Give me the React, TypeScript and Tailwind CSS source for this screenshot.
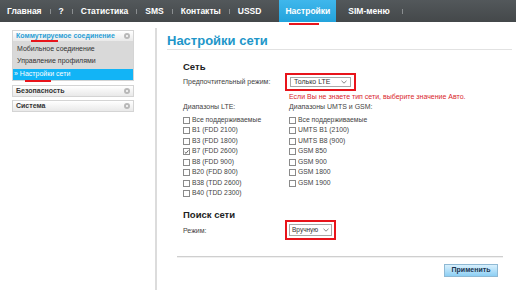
import React from "react";

const Chevron = () => (
  <svg width="6" height="4" viewBox="0 0 6 4" className="shrink-0">
    <path d="M0.5 0.8 L3 3.2 L5.5 0.8" fill="none" stroke="#666" strokeWidth="0.8" />
  </svg>
);

const Circle = () => (
  <span className="w-[6px] h-[6px] rounded-full bg-[#b8b8b8] flex items-center justify-center shrink-0">
    <span className="w-[2px] h-[2px] rounded-full bg-white" />
  </span>
);

const Check = ({ checked, label }: { checked?: boolean; label: string }) => (
  <div className="h-[10.5px] flex items-center">
    <span className="w-[7px] h-[7px] border border-[#8a8a8a] bg-white mr-[2px] flex items-center justify-center shrink-0">
      {checked && (
        <svg width="6" height="6" viewBox="0 0 6 6">
          <path d="M0.8 3 L2.4 4.6 L5.3 1" fill="none" stroke="#333" strokeWidth="0.9" />
        </svg>
      )}
    </span>
    <span className="text-[6.8px] text-[#444] leading-none whitespace-nowrap">{label}</span>
  </div>
);

const Sep = () => <span className="w-px h-[5px] bg-[#8a8e90] shrink-0" />;

export default function App() {
  const nav = ["Главная", "?", "Статистика", "SMS", "Контакты", "USSD"];
  return (
    <div
      className="w-[516px] h-[290px] overflow-hidden bg-white"
      style={{ fontFamily: '"Liberation Sans", Arial, sans-serif' }}
    >
      {/* top nav */}
      <div className="h-[22px] flex items-center bg-gradient-to-b from-[#53585b] to-[#44484a] text-white font-bold text-[8.5px]">
        <div className="flex items-center h-full pl-[7px]">
          {nav.map((n, i) => (
            <React.Fragment key={n}>
              <span className="px-[8px] first:pl-0">{n}</span>
              {i < nav.length - 1 && <Sep />}
            </React.Fragment>
          ))}
          <span className="relative ml-[10px] h-full px-[6px] flex items-center bg-gradient-to-b from-[#3fb7ec] to-[#22a3dc]">
            Настройки
            <span className="absolute left-[10px] top-[23px] w-[30px] h-[2px] bg-[#e8141b]" />
          </span>
          <span className="px-[12px]">SIM-меню</span>
          <Sep />
        </div>
      </div>

      <div className="flex">
        {/* sidebar */}
        <div className="w-[155px] pl-[12px] pr-[21px] pt-[8px] shrink-0">
          <div className="border border-[#d4d4d4]">
            <div className="relative h-[10px] flex items-center justify-between pl-[3px] pr-[3px] bg-gradient-to-b from-white to-[#e9e9e9] text-[7px] font-bold text-[#2a9fd6]">
              <span>Коммутируемое соединение</span>
              <Circle />
              <span className="absolute left-[18px] top-[9px] w-[27px] h-[1.5px] bg-[#e8141b]" />
            </div>
            <div className="bg-[#d9d9d9] pt-[2px] pb-[2px] text-[7px] text-[#333]">
              <div className="h-[12px] flex items-center pl-[4px]">Мобильное соединение</div>
              <div className="h-[12px] flex items-center pl-[4px]">Управление профилями</div>
            </div>
            <div className="relative h-[11px] flex items-center pl-[1px] bg-[#12b4f6] text-[7px] text-white">
              » Настройки сети
              <span className="absolute left-[12px] top-[11px] w-[26px] h-[1.5px] bg-[#e8141b]" />
            </div>
          </div>
          <div className="mt-[4px] h-[12px] border border-[#d4d4d4] flex items-center justify-between pl-[3px] pr-[3px] bg-gradient-to-b from-white to-[#e9e9e9] text-[7px] font-bold text-[#333]">
            <span>Безопасность</span>
            <Circle />
          </div>
          <div className="mt-[3px] h-[12px] border border-[#d4d4d4] flex items-center justify-between pl-[3px] pr-[3px] bg-gradient-to-b from-white to-[#e9e9e9] text-[7px] font-bold text-[#333]">
            <span>Система</span>
            <Circle />
          </div>
        </div>

        {/* content */}
        <div className="flex-1 mt-[6px] h-[262px] border-l-2 border-[#dcdcdc] pt-[4px]">
          <div className="ml-[10px] mr-[4px] h-[18px] leading-[17px] text-[13px] font-bold text-[#2196c9] border-b border-[#e2e2e2]">
            Настройки сети
          </div>

          <div className="ml-[26px]">
            <div className="mt-[11px] h-[12px] leading-[12px] text-[9.5px] font-bold text-[#222]">Сеть</div>
            <div className="h-[18px] flex items-center">
              <span className="w-[102px] text-[7px] text-[#444]">Предпочтительный режим:</span>
              <div className="border-2 border-[#e8141b] px-[3px] py-[2px]">
                <div className="w-[61px] h-[10px] border border-[#a8a8a8] bg-white flex items-center justify-between pl-[3px] pr-[3px] text-[7px] text-[#333]">
                  <span>Только LTE</span>
                  <Chevron />
                </div>
              </div>
            </div>
            <div className="mt-[1px] ml-[106px] h-[9px] leading-[9px] text-[7px] text-[#d9262c] whitespace-nowrap">
              Если Вы не знаете тип сети, выберите значение Авто.
            </div>
            <div className="grid grid-cols-[106px_1fr] mt-[1px]">
              <div className="h-[10px] leading-[10px] text-[7px] text-[#444]">Диапазоны LTE:</div>
              <div className="h-[10px] leading-[10px] text-[7px] text-[#444]">Диапазоны UMTS и GSM:</div>
            </div>
            <div className="grid grid-cols-[106px_1fr] mt-[3px]">
              <div>
                <Check label="Все поддерживаемые" />
                <Check label="B1 (FDD 2100)" />
                <Check label="B3 (FDD 1800)" />
                <Check checked label="B7 (FDD 2600)" />
                <Check label="B8 (FDD 900)" />
                <Check label="B20 (FDD 800)" />
                <Check label="B38 (TDD 2600)" />
                <Check label="B40 (TDD 2300)" />
              </div>
              <div>
                <Check label="Все поддерживаемые" />
                <Check label="UMTS B1 (2100)" />
                <Check label="UMTS B8 (900)" />
                <Check label="GSM 850" />
                <Check label="GSM 900" />
                <Check label="GSM 1800" />
                <Check label="GSM 1900" />
              </div>
            </div>

            <div className="mt-[10px] h-[11px] leading-[11px] text-[9.5px] font-bold text-[#222]">Поиск сети</div>
            <div className="h-[20px] flex items-center">
              <span className="w-[102px] pt-[3px] text-[7px] text-[#444]">Режим:</span>
              <div className="border-2 border-[#e8141b] px-[2px] py-[2px]">
                <div className="w-[43px] h-[12px] border border-[#a8a8a8] bg-white flex items-center justify-between pl-[2px] pr-[2px] text-[6.5px] text-[#333]">
                  <span>Вручную</span>
                  <Chevron />
                </div>
              </div>
            </div>
          </div>

          <div className="mt-[16px] ml-[20px] w-[326px] h-[2px] border-t border-[#cfcfcf] bg-[#f0f0f0]" />
          <div className="mt-[6px] ml-[287px] w-[54px] h-[13px] border border-[#8fb9d4] bg-gradient-to-b from-[#d8f0fd] to-[#8ccff4] flex items-center justify-center text-[7px] font-bold text-[#1c3550]">
            Применить
          </div>
        </div>
      </div>
    </div>
  );
}
